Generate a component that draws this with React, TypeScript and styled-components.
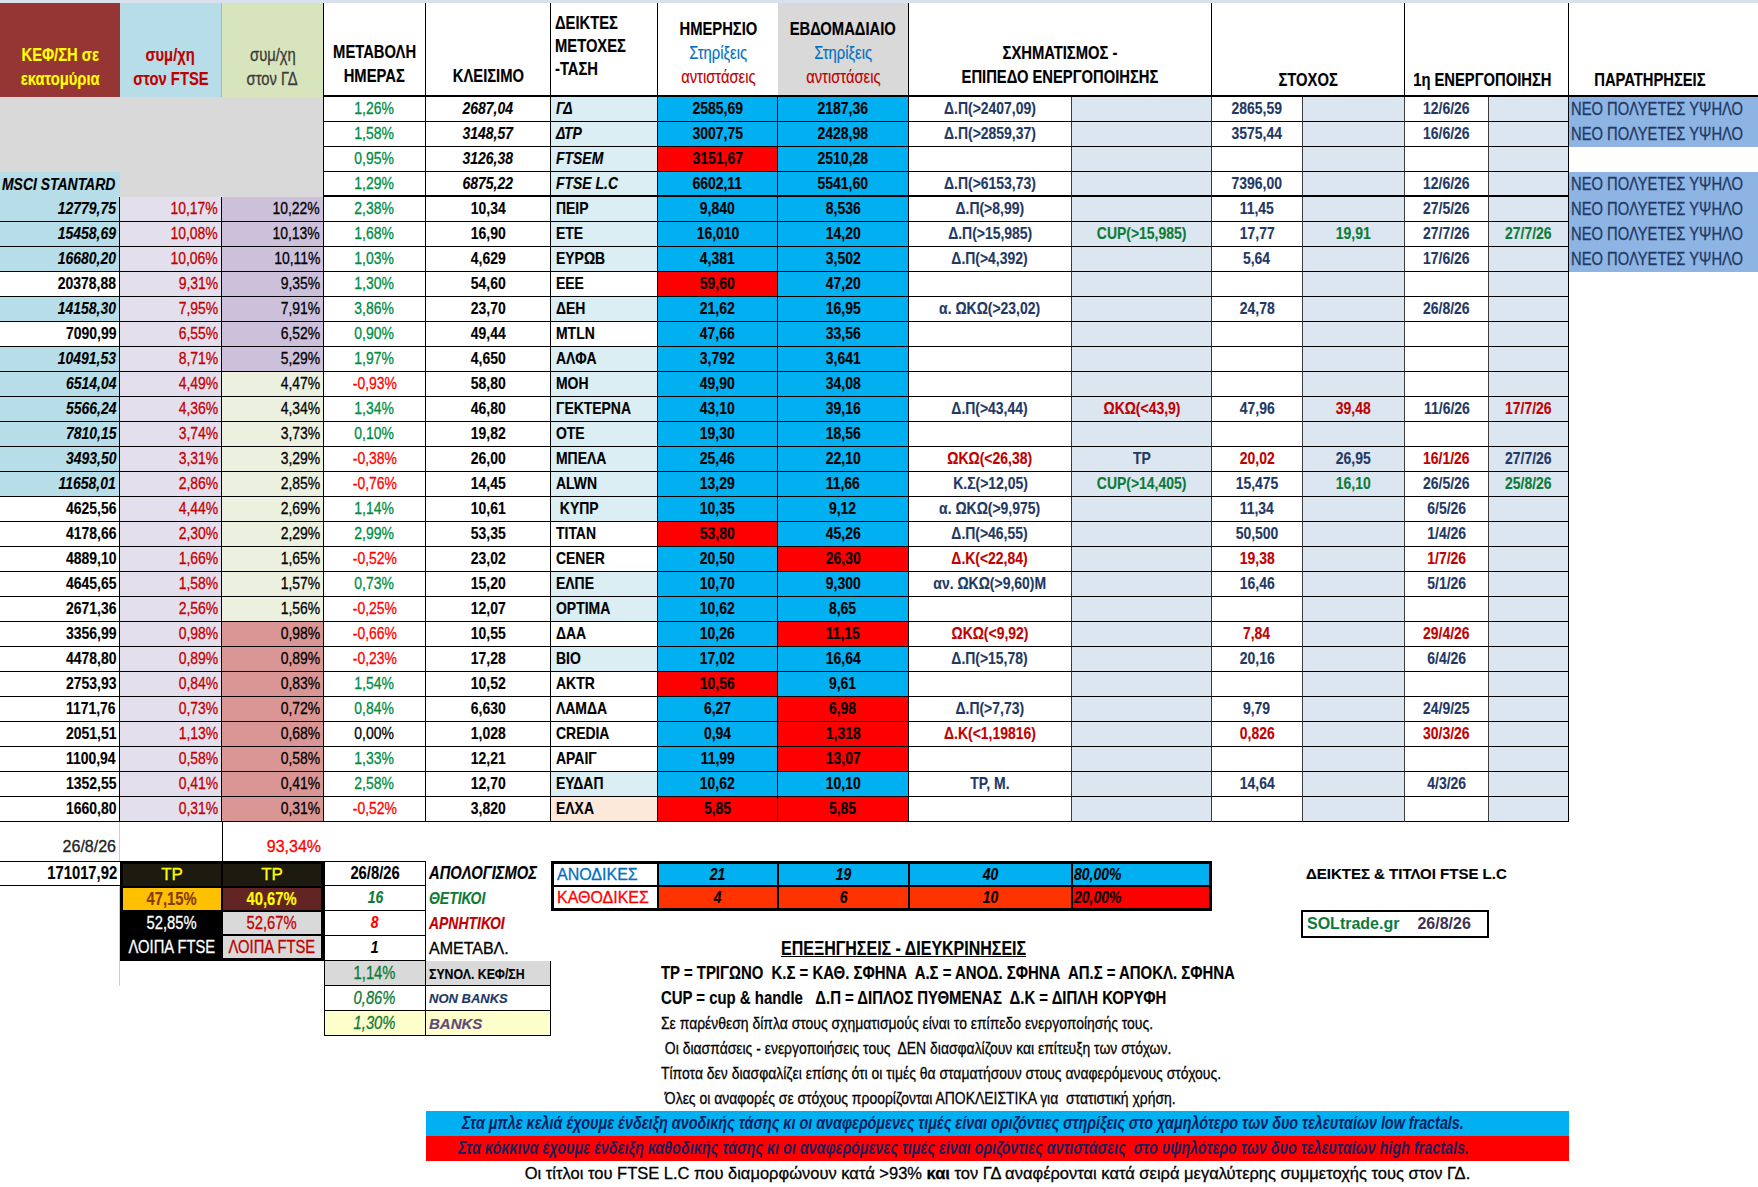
import React from 'react';
import styled, { createGlobalStyle } from 'styled-components';

// Arial Narrow is not installed: Liberation Sans squeezed horizontally gives the same look.
const FONT = `"Liberation Sans", Arial, sans-serif`;
const SQUEEZE = 0.82;
const COLS = '120px 102px 102px 102px 125px 107px 120px 131px 163px 140px 91px 102px 84px 80px 189px';

const LINE = '1px solid #000';
const THICK = '2px solid #000';
const THIN = '1px solid #3c3c3c';

const NAVY = '#1f3864';
const RED = '#c00000';
const GREEN = '#008c3e';
const DGREEN = '#0d7a36';
const BLUE = '#00b0f0';
const HOT = '#ff0000';

const GlobalStyle = createGlobalStyle`
  body {
    margin: 0;
    background: #fff;
    font-family: ${FONT};
  }
`;

const Page = styled.div`
  width: 1758px;
  height: 1187px;
  overflow: hidden;
  border-top: 3px solid #d9e1ec;
  box-sizing: border-box;
`;

const Sheet = styled.div`
  display: grid;
  grid-template-columns: ${COLS};
  grid-template-rows: 94px repeat(29, 25px);
`;

interface BoxProps {
  $bg?: string;
  $color?: string;
  $align?: 'left' | 'center' | 'right';
  $bold?: boolean;
  $italic?: boolean;
  $size?: number;
  $wide?: boolean;
  $bb?: string;
  $br?: string;
  $bt?: string;
  $bl?: string;
  $span?: number;
  $col?: string;
  $row?: string;
  $pad?: number;
}

const Box = styled.div<BoxProps>`
  --o: ${(p) => (p.$align === 'left' ? 'left' : p.$align === 'right' ? 'right' : 'center')};
  box-sizing: border-box;
  min-width: 0;
  display: flex;
  align-items: center;
  justify-content: ${(p) => (p.$align === 'left' ? 'flex-start' : p.$align === 'right' ? 'flex-end' : 'center')};
  padding: 0 ${(p) => p.$pad ?? 3}px;
  background: ${(p) => p.$bg ?? 'transparent'};
  color: ${(p) => p.$color ?? '#000'};
  font-family: ${FONT};
  font-size: ${(p) => p.$size ?? 17}px;
  font-weight: ${(p) => (p.$bold ? 700 : 400)};
  font-style: ${(p) => (p.$italic ? 'italic' : 'normal')};
  -webkit-text-stroke: ${(p) => (p.$bold ? '0.15px currentColor' : '0.3px currentColor')};
  white-space: nowrap;
  border-bottom: ${(p) => p.$bb ?? 'none'};
  border-right: ${(p) => p.$br ?? 'none'};
  border-top: ${(p) => p.$bt ?? 'none'};
  border-left: ${(p) => p.$bl ?? 'none'};
  ${(p) => (p.$span ? `grid-column: span ${p.$span};` : '')}
  ${(p) => (p.$col ? `grid-column: ${p.$col};` : '')}
  ${(p) => (p.$row ? `grid-row: ${p.$row};` : '')}
`;

const Txt = styled.span<{ $under?: boolean }>`
  display: inline-block;
  transform: scaleX(${SQUEEZE});
  transform-origin: var(--o);
  text-decoration: ${(p) => (p.$under ? 'underline' : 'none')};
`;

const Cell: React.FC<BoxProps & { children?: React.ReactNode }> = ({ children, ...p }) => (
  <Box {...p}>{children === undefined || children === '' || p.$wide ? children : <Txt>{children}</Txt>}</Box>
);

const HeadCell = styled(Box)<{ $pb?: number; $lh?: number; $pr?: number }>`
  flex-direction: column;
  justify-content: flex-end;
  align-items: ${(p) => (p.$align === 'left' ? 'flex-start' : 'center')};
  padding-bottom: ${(p) => p.$pb ?? 6}px;
  padding-right: ${(p) => p.$pr ?? 3}px;
  line-height: ${(p) => p.$lh ?? 24}px;
  font-size: 18px;
`;

const HeadLine = styled(Txt)<{ $color?: string; $normal?: boolean }>`
  color: ${(p) => p.$color ?? 'inherit'};
  font-weight: ${(p) => (p.$normal ? 400 : 'inherit')};
`;

const GrayArea = styled.div`
  grid-column: 1 / 4;
  grid-row: 2 / 5;
  background: #d9d9d9;
  border-right: ${LINE};
`;

/* ---------- data ---------- */

type Tone = 'n' | 'r' | 'g';
type Mark = [string, Tone?];

interface Row {
  cap?: string;
  msci?: boolean;
  ftse?: string;
  gd?: string;
  gdBg?: string;
  chg: string;
  close: string;
  name: string;
  nameBg: string;
  d: string;
  dHot?: boolean;
  w: string;
  wHot?: boolean;
  marks?: (Mark | null)[];
  note?: boolean;
  index?: boolean;
}

const LB = '#daeef3';
const WH = '#fff';
const PE = '#fde9d9';
const LAV = '#ccc0da';
const LGR = '#ebf1de';
const PNK = '#da9694';

const indexRows: Row[] = [
  { chg: '1,26%', close: '2687,04', name: 'ΓΔ', nameBg: LB, d: '2585,69', w: '2187,36', marks: [['Δ.Π(>2407,09)'], null, ['2865,59'], null, ['12/6/26'], null], note: true, index: true },
  { chg: '1,58%', close: '3148,57', name: 'ΔΤΡ', nameBg: LB, d: '3007,75', w: '2428,98', marks: [['Δ.Π(>2859,37)'], null, ['3575,44'], null, ['16/6/26'], null], note: true, index: true },
  { chg: '0,95%', close: '3126,38', name: 'FTSEM', nameBg: LB, d: '3151,67', dHot: true, w: '2510,28', index: true },
  { chg: '1,29%', close: '6875,22', name: 'FTSE L.C', nameBg: LB, d: '6602,11', w: '5541,60', marks: [['Δ.Π(>6153,73)'], null, ['7396,00'], null, ['12/6/26'], null], note: true, index: true },
];

const stocks: Row[] = [
  { cap: '12779,75', msci: true, ftse: '10,17%', gd: '10,22%', gdBg: LAV, chg: '2,38%', close: '10,34', name: 'ΠΕΙΡ', nameBg: LB, d: '9,840', w: '8,536', marks: [['Δ.Π(>8,99)'], null, ['11,45'], null, ['27/5/26'], null], note: true },
  { cap: '15458,69', msci: true, ftse: '10,08%', gd: '10,13%', gdBg: LAV, chg: '1,68%', close: '16,90', name: 'ΕΤΕ', nameBg: LB, d: '16,010', w: '14,20', marks: [['Δ.Π(>15,985)'], ['CUP(>15,985)', 'g'], ['17,77'], ['19,91', 'g'], ['27/7/26'], ['27/7/26', 'g']], note: true },
  { cap: '16680,20', msci: true, ftse: '10,06%', gd: '10,11%', gdBg: LAV, chg: '1,03%', close: '4,629', name: 'ΕΥΡΩΒ', nameBg: LB, d: '4,381', w: '3,502', marks: [['Δ.Π(>4,392)'], null, ['5,64'], null, ['17/6/26'], null], note: true },
  { cap: '20378,88', ftse: '9,31%', gd: '9,35%', gdBg: LAV, chg: '1,30%', close: '54,60', name: 'ΕΕΕ', nameBg: WH, d: '59,60', dHot: true, w: '47,20' },
  { cap: '14158,30', msci: true, ftse: '7,95%', gd: '7,91%', gdBg: LAV, chg: '3,86%', close: '23,70', name: 'ΔΕΗ', nameBg: LB, d: '21,62', w: '16,95', marks: [['α. ΩΚΩ(>23,02)'], null, ['24,78'], null, ['26/8/26'], null] },
  { cap: '7090,99', ftse: '6,55%', gd: '6,52%', gdBg: LAV, chg: '0,90%', close: '49,44', name: 'MTLN', nameBg: WH, d: '47,66', w: '33,56' },
  { cap: '10491,53', msci: true, ftse: '8,71%', gd: '5,29%', gdBg: LAV, chg: '1,97%', close: '4,650', name: 'ΑΛΦΑ', nameBg: LB, d: '3,792', w: '3,641' },
  { cap: '6514,04', msci: true, ftse: '4,49%', gd: '4,47%', gdBg: LGR, chg: '-0,93%', close: '58,80', name: 'ΜΟΗ', nameBg: LB, d: '49,90', w: '34,08' },
  { cap: '5566,24', msci: true, ftse: '4,36%', gd: '4,34%', gdBg: LGR, chg: '1,34%', close: '46,80', name: 'ΓΕΚΤΕΡΝΑ', nameBg: LB, d: '43,10', w: '39,16', marks: [['Δ.Π(>43,44)'], ['ΩΚΩ(<43,9)', 'r'], ['47,96'], ['39,48', 'r'], ['11/6/26'], ['17/7/26', 'r']] },
  { cap: '7810,15', msci: true, ftse: '3,74%', gd: '3,73%', gdBg: LGR, chg: '0,10%', close: '19,82', name: 'ΟΤΕ', nameBg: LB, d: '19,30', w: '18,56' },
  { cap: '3493,50', msci: true, ftse: '3,31%', gd: '3,29%', gdBg: LGR, chg: '-0,38%', close: '26,00', name: 'ΜΠΕΛΑ', nameBg: LB, d: '25,46', w: '22,10', marks: [['ΩΚΩ(<26,38)', 'r'], ['TP'], ['20,02', 'r'], ['26,95'], ['16/1/26', 'r'], ['27/7/26']] },
  { cap: '11658,01', msci: true, ftse: '2,86%', gd: '2,85%', gdBg: LGR, chg: '-0,76%', close: '14,45', name: 'ALWN', nameBg: LB, d: '13,29', w: '11,66', marks: [['Κ.Σ(>12,05)'], ['CUP(>14,405)', 'g'], ['15,475'], ['16,10', 'g'], ['26/5/26'], ['25/8/26', 'g']] },
  { cap: '4625,56', ftse: '4,44%', gd: '2,69%', gdBg: LGR, chg: '1,14%', close: '10,61', name: '\u00a0ΚΥΠΡ', nameBg: LB, d: '10,35', w: '9,12', marks: [['α. ΩΚΩ(>9,975)'], null, ['11,34'], null, ['6/5/26'], null] },
  { cap: '4178,66', ftse: '2,30%', gd: '2,29%', gdBg: LGR, chg: '2,99%', close: '53,35', name: 'TITAN', nameBg: WH, d: '53,80', dHot: true, w: '45,26', marks: [['Δ.Π(>46,55)'], null, ['50,500'], null, ['1/4/26'], null] },
  { cap: '4889,10', ftse: '1,66%', gd: '1,65%', gdBg: LGR, chg: '-0,52%', close: '23,02', name: 'CENER', nameBg: WH, d: '20,50', w: '26,30', wHot: true, marks: [['Δ.Κ(<22,84)', 'r'], null, ['19,38', 'r'], null, ['1/7/26', 'r'], null] },
  { cap: '4645,65', ftse: '1,58%', gd: '1,57%', gdBg: LGR, chg: '0,73%', close: '15,20', name: 'ΕΛΠΕ', nameBg: LB, d: '10,70', w: '9,300', marks: [['αν. ΩΚΩ(>9,60)Μ'], null, ['16,46'], null, ['5/1/26'], null] },
  { cap: '2671,36', ftse: '2,56%', gd: '1,56%', gdBg: LGR, chg: '-0,25%', close: '12,07', name: 'OPTIMA', nameBg: LB, d: '10,62', w: '8,65' },
  { cap: '3356,99', ftse: '0,98%', gd: '0,98%', gdBg: PNK, chg: '-0,66%', close: '10,55', name: 'ΔΑΑ', nameBg: WH, d: '10,26', w: '11,15', wHot: true, marks: [['ΩΚΩ(<9,92)', 'r'], null, ['7,84', 'r'], null, ['29/4/26', 'r'], null] },
  { cap: '4478,80', ftse: '0,89%', gd: '0,89%', gdBg: PNK, chg: '-0,23%', close: '17,28', name: 'ΒΙΟ', nameBg: LB, d: '17,02', w: '16,64', marks: [['Δ.Π(>15,78)'], null, ['20,16'], null, ['6/4/26'], null] },
  { cap: '2753,93', ftse: '0,84%', gd: '0,83%', gdBg: PNK, chg: '1,54%', close: '10,52', name: 'AKTR', nameBg: WH, d: '10,56', dHot: true, w: '9,61' },
  { cap: '1171,76', ftse: '0,73%', gd: '0,72%', gdBg: PNK, chg: '0,84%', close: '6,630', name: 'ΛΑΜΔΑ', nameBg: WH, d: '6,27', w: '6,98', wHot: true, marks: [['Δ.Π(>7,73)'], null, ['9,79'], null, ['24/9/25'], null] },
  { cap: '2051,51', ftse: '1,13%', gd: '0,68%', gdBg: PNK, chg: '0,00%', close: '1,028', name: 'CREDIA', nameBg: WH, d: '0,94', w: '1,318', wHot: true, marks: [['Δ.Κ(<1,19816)', 'r'], null, ['0,826', 'r'], null, ['30/3/26', 'r'], null] },
  { cap: '1100,94', ftse: '0,58%', gd: '0,58%', gdBg: PNK, chg: '1,33%', close: '12,21', name: 'ΑΡΑΙΓ', nameBg: WH, d: '11,99', w: '13,07', wHot: true },
  { cap: '1352,55', ftse: '0,41%', gd: '0,41%', gdBg: PNK, chg: '2,58%', close: '12,70', name: 'ΕΥΔΑΠ', nameBg: LB, d: '10,62', w: '10,10', marks: [['TP, M.'], null, ['14,64'], null, ['4/3/26'], null] },
  { cap: '1660,80', ftse: '0,31%', gd: '0,31%', gdBg: PNK, chg: '-0,52%', close: '3,820', name: 'ΕΛΧΑ', nameBg: PE, d: '5,85', dHot: true, w: '5,85', wHot: true },
];

const toneColor = (t?: Tone) => (t === 'r' ? RED : t === 'g' ? DGREEN : NAVY);
const changeColor = (v: string) => (v.startsWith('-') ? HOT : v === '0,00%' ? '#000' : GREEN);

/* ---------- rows ---------- */

const RightPart: React.FC<{ row: Row; bb: string }> = ({ row, bb }) => (
  <>
    <Cell $bg={row.dHot ? HOT : BLUE} $bold $bb={bb} $br={LINE}>{row.d}</Cell>
    <Cell $bg={row.wHot ? HOT : BLUE} $bold $bb={bb} $br={LINE}>{row.w}</Cell>
    {Array.from({ length: 6 }).map((_, i) => {
      const m = row.marks?.[i];
      return (
        <Cell key={i} $bg={i % 2 ? '#dce6f1' : '#fff'} $color={toneColor(m?.[1])} $bold $bb={bb} $br={i === 5 ? LINE : THIN}>
          {m?.[0] ?? ''}
        </Cell>
      );
    })}
    <Cell $bg={row.note ? '#8db4e2' : '#fff'} $color={NAVY} $align="left" $pad={2} $size={18}>
      {row.note ? 'ΝΕΟ ΠΟΛΥΕΤΕΣ ΥΨΗΛΟ' : ''}
    </Cell>
  </>
);

const MiddlePart: React.FC<{ row: Row; bb: string }> = ({ row, bb }) => (
  <>
    <Cell $color={changeColor(row.chg)} $bb={bb} $br={LINE}>{row.chg}</Cell>
    <Cell $bold $italic={row.index} $bb={bb} $br={LINE}>{row.close}</Cell>
    <Cell $align="left" $bg={row.nameBg} $bold $italic={row.index} $bb={bb} $br={LINE} $pad={5}>
      {row.name}
    </Cell>
  </>
);

const IndexRow: React.FC<{ row: Row; last?: boolean }> = ({ row, last }) => {
  const bb = last ? THICK : LINE;
  return (
    <>
      {last && (
        <>
          <Cell $align="left" $bg="#b7dee8" $bold $italic $pad={2}>MSCI STANTARD</Cell>
          <Cell $span={2} $bg="#d9d9d9" $br={LINE} />
        </>
      )}
      <MiddlePart row={row} bb={bb} />
      <RightPart row={row} bb={bb} />
    </>
  );
};

const StockRow: React.FC<{ row: Row }> = ({ row }) => (
  <>
    <Cell $align="right" $bg={row.msci ? '#b7dee8' : '#fff'} $bold $italic={row.msci} $bb={LINE} $br={LINE}>
      {row.cap}
    </Cell>
    <Cell $align="right" $bg="#e4dfec" $color={RED} $bb={LINE} $br={LINE}>{row.ftse}</Cell>
    <Cell $align="right" $bg={row.gdBg} $bb={LINE} $br={LINE}>{row.gd}</Cell>
    <MiddlePart row={row} bb={LINE} />
    <RightPart row={row} bb={LINE} />
  </>
);

/* ---------- bottom ---------- */

const Bottom = styled.div`
  display: grid;
  grid-template-columns: ${COLS};
  grid-template-rows: 39px repeat(13, 25px);
`;

const TpBlock = styled.div`
  grid-column: 2 / 4;
  grid-row: 2 / 6;
  display: grid;
  grid-template-columns: minmax(0, 1fr) minmax(0, 1fr);
  grid-template-rows: repeat(4, minmax(0, 1fr));
  gap: 2px;
  background: #000;
  border: 3px solid #000;
  box-sizing: border-box;
`;

const TrendTable = styled.div`
  grid-column: 6 / 11;
  grid-row: 2 / 4;
  display: grid;
  grid-template-columns: minmax(0, 104fr) minmax(0, 120fr) minmax(0, 131fr) minmax(0, 163fr) minmax(0, 138fr);
  grid-template-rows: repeat(2, minmax(0, 1fr));
  gap: 2px;
  background: #000;
  border: 3px solid #000;
  box-sizing: border-box;
`;

const Brand = styled.div`
  grid-column: 12 / 14;
  grid-row: 4;
  box-sizing: border-box;
  border: 2px solid #000;
  margin: -1px 0 -2px -2px;
  display: flex;
  align-items: center;
  gap: 18px;
  padding-left: 4px;
  font-family: ${FONT};
  font-weight: 700;
  font-size: 16px;
`;

const BrandName = styled.span`
  color: #0b7a3e;
`;

const BrandDate = styled.span`
  color: #403151;
`;

const Title = styled(Box)`
  grid-column: 8 / 12;
  grid-row: 5;
  --o: left;
  justify-content: flex-start;
  font-weight: 700;
  font-size: 19.5px;
`;

const Legend = styled(Box)`
  grid-column: 7 / 15;
  --o: left;
  justify-content: flex-start;
`;

const Band = styled(Box)<{ $red?: boolean }>`
  grid-column: 5 / 15;
  padding-right: 72px;
  background: ${(p) => (p.$red ? HOT : BLUE)};
  color: ${(p) => (p.$red ? '#1c1f5a' : '#002060')};
  font-weight: 700;
  font-style: italic;
  font-size: 17.5px;
  -webkit-text-stroke: 0;
`;

const App: React.FC = () => (
  <Page>
    <GlobalStyle />
    <Sheet>
      <HeadCell $bg="#963634" $color="#ffff00" $bold>
        <Txt>ΚΕΦ/ΣΗ σε</Txt>
        <Txt>εκατομύρια</Txt>
      </HeadCell>
      <HeadCell $bg="#b7dee8" $color={RED} $bold $br="1px solid #9fb9c1">
        <Txt>συμ/χη</Txt>
        <Txt>στον FTSE</Txt>
      </HeadCell>
      <HeadCell $bg="#d8e4bc" $color="#3a3a3a" $br={LINE}>
        <Txt>συμ/χη</Txt>
        <Txt>στον ΓΔ</Txt>
      </HeadCell>
      <HeadCell $bold $bb={THICK} $br={LINE} $pb={7}>
        <Txt>ΜΕΤΑΒΟΛΗ</Txt>
        <Txt>ΗΜΕΡΑΣ</Txt>
      </HeadCell>
      <HeadCell $bold $bb={THICK} $br={LINE} $pb={7}>
        <Txt>ΚΛΕΙΣΙΜΟ</Txt>
      </HeadCell>
      <HeadCell $bold $align="left" $bb={THICK} $br={LINE} $pb={14} $lh={23} $pad={4}>
        <Txt>ΔΕΙΚΤΕΣ</Txt>
        <Txt>ΜΕΤΟΧΕΣ</Txt>
        <Txt>-ΤΑΣΗ</Txt>
      </HeadCell>
      <HeadCell $bold $bb={THICK}>
        <Txt>ΗΜΕΡΗΣΙΟ</Txt>
        <HeadLine $color="#0070c0" $normal>Στηρίξεις</HeadLine>
        <HeadLine $color={RED} $normal>αντιστάσεις</HeadLine>
      </HeadCell>
      <HeadCell $bold $bg="#d9d9d9" $bb={THICK} $br={LINE}>
        <Txt>ΕΒΔΟΜΑΔΙΑΙΟ</Txt>
        <HeadLine $color="#0070c0" $normal>Στηρίξεις</HeadLine>
        <HeadLine $color={RED} $normal>αντιστάσεις</HeadLine>
      </HeadCell>
      <HeadCell $bold $span={2} $bb={THICK} $br={LINE}>
        <Txt>ΣΧΗΜΑΤΙΣΜΟΣ -</Txt>
        <Txt>ΕΠΙΠΕΔΟ ΕΝΕΡΓΟΠΟΙΗΣΗΣ</Txt>
      </HeadCell>
      <HeadCell $bold $span={2} $bb={THICK} $br={LINE} $pb={3}>
        <Txt>ΣΤΟΧΟΣ</Txt>
      </HeadCell>
      <HeadCell $bold $span={2} $bb={THICK} $br={LINE} $pb={3} $pr={12}>
        <Txt>1η ΕΝΕΡΓΟΠΟΙΗΣΗ</Txt>
      </HeadCell>
      <HeadCell $bold $bb={THICK} $pb={3} $pr={30}>
        <Txt>ΠΑΡΑΤΗΡΗΣΕΙΣ</Txt>
      </HeadCell>

      <GrayArea />
      {indexRows.map((r, i) => (
        <IndexRow key={r.name} row={r} last={i === 3} />
      ))}
      {stocks.map((r) => (
        <StockRow key={r.name} row={r} />
      ))}
    </Sheet>

    <Bottom>
      <Cell $col="1" $row="1" $align="right" $wide $size={16} $color="#222" $br="1px solid #c5d0de">
        <span style={{ paddingTop: 10 }}>26/8/26</span>
      </Cell>
      <Cell $col="3" $row="1" $align="right" $wide $size={16} $color={HOT} $bl={LINE}>
        <span style={{ paddingTop: 10 }}>93,34%</span>
      </Cell>
      <Cell $col="1" $row="2" $align="right" $bold $bt={LINE} $bb={LINE} $size={18}>171017,92</Cell>
      <Cell $col="1" $row="3 / 7" $br="1px solid #c5d0de" />

      <TpBlock>
        <Cell $bg="#1d1b10" $color="#ffff00" $wide $size={17}>TP</Cell>
        <Cell $bg="#1d1b10" $color="#ffff00" $wide $size={17}>TP</Cell>
        <Cell $bg="#ffc000" $color="#843c0c" $bold $size={18}>47,15%</Cell>
        <Cell $bg="#632523" $color="#ffff00" $bold $size={18}>40,67%</Cell>
        <Cell $bg="#000" $color="#fff" $size={18}>52,85%</Cell>
        <Cell $bg="#d9d9d9" $color={RED} $size={18}>52,67%</Cell>
        <Cell $bg="#000" $color="#fff" $size={18}>ΛΟΙΠΑ FTSE</Cell>
        <Cell $bg="#d9d9d9" $color={RED} $size={18}>ΛΟΙΠΑ FTSE</Cell>
      </TpBlock>

      <Cell $col="4" $row="2" $bold $bt={LINE} $bb={LINE} $br={LINE} $bl={LINE} $size={18}>26/8/26</Cell>
      <Cell $col="4" $row="3" $bold $italic $color={DGREEN} $bb={LINE} $br={LINE} $bl={LINE}>16</Cell>
      <Cell $col="4" $row="4" $bold $italic $color={HOT} $bb={LINE} $br={LINE} $bl={LINE}>8</Cell>
      <Cell $col="4" $row="5" $bold $italic $bb={LINE} $br={LINE} $bl={LINE}>1</Cell>
      <Cell $col="5" $row="2" $bold $italic $align="left" $size={18}>ΑΠΟΛΟΓΙΣΜΟΣ</Cell>
      <Cell $col="5" $row="3" $bold $italic $align="left" $color={DGREEN}>ΘΕΤΙΚΟΙ</Cell>
      <Cell $col="5" $row="4" $bold $italic $align="left" $color={RED}>ΑΡΝΗΤΙΚΟΙ</Cell>
      <Cell $col="5" $row="5" $align="left" $wide $size={16}>ΑΜΕΤΑΒΛ.</Cell>

      <Cell $col="4" $row="6" $bg="#d9d9d9" $color={DGREEN} $bb={LINE} $br={LINE} $bl={LINE} $size={18}>1,14%</Cell>
      <Cell $col="5" $row="6" $bg="#d9d9d9" $bold $align="left" $size={15} $bb={LINE} $br={LINE}>ΣΥΝΟΛ. ΚΕΦ/ΣΗ</Cell>
      <Cell $col="4" $row="7" $italic $color={DGREEN} $bb={LINE} $br={LINE} $bl={LINE} $size={18}>0,86%</Cell>
      <Cell $col="5" $row="7" $bold $italic $wide $align="left" $size={13} $color={NAVY} $bb={LINE} $br={LINE}>NON BANKS</Cell>
      <Cell $col="4" $row="8" $bg="#ffffcc" $italic $color={DGREEN} $bb={LINE} $br={LINE} $bl={LINE} $size={18}>1,30%</Cell>
      <Cell $col="5" $row="8" $bg="#ffffcc" $bold $italic $wide $align="left" $size={15} $color="#604a7b" $bb={LINE} $br={LINE}>BANKS</Cell>

      <TrendTable>
        <Cell $bg="#fff" $color="#0070c0" $wide $size={16} $align="left">ΑΝΟΔΙΚΕΣ</Cell>
        <Cell $bg={BLUE} $bold $italic>21</Cell>
        <Cell $bg={BLUE} $bold $italic>19</Cell>
        <Cell $bg={BLUE} $bold $italic>40</Cell>
        <Cell $bg={BLUE} $bold $italic $align="left" $pad={1}>80,00%</Cell>
        <Cell $bg="#fff" $color={HOT} $wide $size={16} $align="left">ΚΑΘΟΔΙΚΕΣ</Cell>
        <Cell $bg="#ff3300" $bold $italic>4</Cell>
        <Cell $bg="#ff3300" $bold $italic>6</Cell>
        <Cell $bg="#ff3300" $bold $italic>10</Cell>
        <Cell $bg={HOT} $bold $italic $align="left" $pad={1}>20,00%</Cell>
      </TrendTable>

      <Cell $col="12 / 16" $row="2" $align="left" $wide $bold $size={15}>ΔΕΙΚΤΕΣ &amp; ΤΙΤΛΟΙ FTSE L.C</Cell>
      <Brand>
        <BrandName>SOLtrade.gr</BrandName>
        <BrandDate>26/8/26</BrandDate>
      </Brand>

      <Title $bold>
        <Txt $under>ΕΠΕΞΗΓΗΣΕΙΣ - ΔΙΕΥΚΡΙΝΗΣΕΙΣ</Txt>
      </Title>
      <Legend $row="6" $bold $size={18.2}>
        <Txt>TP = ΤΡΙΓΩΝΟ&nbsp; Κ.Σ = ΚΑΘ. ΣΦΗΝΑ&nbsp; Α.Σ = ΑΝΟΔ. ΣΦΗΝΑ&nbsp; ΑΠ.Σ = ΑΠΟΚΛ. ΣΦΗΝΑ</Txt>
      </Legend>
      <Legend $row="7" $bold $size={18.2}>
        <Txt>CUP = cup &amp; handle&nbsp;&nbsp; Δ.Π = ΔΙΠΛΟΣ ΠΥΘΜΕΝΑΣ&nbsp; Δ.Κ = ΔΙΠΛΗ ΚΟΡΥΦΗ</Txt>
      </Legend>
      <Legend $row="8" $size={17}>
        <Txt>Σε παρένθεση δίπλα στους σχηματισμούς είναι το επίπεδο ενεργοποίησής τους.</Txt>
      </Legend>
      <Legend $row="9" $size={17}>
        <Txt>&nbsp;Οι διασπάσεις - ενεργοποιήσεις τους&nbsp; ΔΕΝ διασφαλίζουν και επίτευξη των στόχων.</Txt>
      </Legend>
      <Legend $row="10" $size={17}>
        <Txt>Τίποτα δεν διασφαλίζει επίσης ότι οι τιμές θα σταματήσουν στους αναφερόμενους στόχους.</Txt>
      </Legend>
      <Legend $row="11" $size={17}>
        <Txt>&nbsp;Όλες οι αναφορές σε στόχους προορίζονται ΑΠΟΚΛΕΙΣΤΙΚΑ για&nbsp; στατιστική χρήση.</Txt>
      </Legend>
      <Band $row="12">
        <Txt>
          Στα μπλε κελιά έχουμε ένδειξη ανοδικής τάσης κι οι αναφερόμενες τιμές είναι οριζόντιες στηρίξεις στο χαμηλότερο των δυο τελευταίων low fractals.
        </Txt>
      </Band>
      <Band $row="13" $red>
        <Txt>
          Στα κόκκινα έχουμε ένδειξη καθοδικής τάσης κι οι αναφερόμενες τιμές είναι οριζόντιες αντιστάσεις&nbsp; στο υψηλότερο των δυο τελευταίων high fractals.
        </Txt>
      </Band>
      <Cell $col="5 / 15" $row="14" $wide $size={16.5}>
        <span>
          Οι τίτλοι του FTSE L.C που διαμορφώνουν κατά &gt;93% <b>και</b> τον ΓΔ αναφέρονται κατά σειρά μεγαλύτερης συμμετοχής τους στον ΓΔ.
        </span>
      </Cell>
    </Bottom>
  </Page>
);

export default App;
